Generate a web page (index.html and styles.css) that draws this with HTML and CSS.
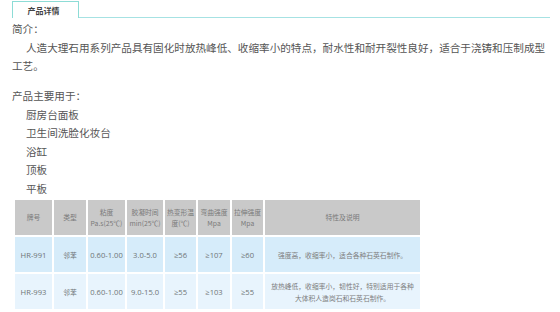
FILE: index.html
```html
<!DOCTYPE html>
<html lang="zh">
<head>
<meta charset="utf-8">
<link rel="stylesheet" href="styles.css">
</head>
<body>
<div class="tabs">
  <div class="tab">产品详情</div>
  <div class="tab-line"></div>
</div>
<div class="content">
  <p>简介：</p>
  <p class="indent">人造大理石用系列产品具有固化时放热峰低、收缩率小的特点，耐水性和耐开裂性良好，适合于浇铸和压制成型工艺。</p>
  <p class="gap">产品主要用于：</p>
  <ul class="uses">
    <li>厨房台面板</li>
    <li>卫生间洗脸化妆台</li>
    <li>浴缸</li>
    <li>顶板</li>
    <li>平板</li>
  </ul>
</div>
<table class="spec">
  <colgroup>
    <col class="c1"><col class="c2"><col class="c3"><col class="c4"><col class="c5"><col class="c6"><col class="c7"><col class="c8">
  </colgroup>
  <thead>
    <tr>
      <th>牌号</th>
      <th>类型</th>
      <th>粘度<br>Pa.s(25℃)</th>
      <th>胶凝时间<br>min(25℃)</th>
      <th>热变形温<br>度(℃)</th>
      <th>弯曲强度<br>Mpa</th>
      <th>拉伸强度<br>Mpa</th>
      <th>特性及说明</th>
    </tr>
  </thead>
  <tbody>
    <tr class="r1">
      <td>HR-991</td>
      <td class="cjk">邻苯</td>
      <td>0.60-1.00</td>
      <td>3.0-5.0</td>
      <td>≥56</td>
      <td>≥107</td>
      <td>≥60</td>
      <td class="desc">强度高，收缩率小，适合各种石英石制作。</td>
    </tr>
    <tr class="r2">
      <td>HR-993</td>
      <td class="cjk">邻苯</td>
      <td>0.60-1.00</td>
      <td>9.0-15.0</td>
      <td>≥55</td>
      <td>≥103</td>
      <td>≥55</td>
      <td class="desc">放热峰低，收缩率小，韧性好，特别适用于各种大体积人造岗石和石英石制作。</td>
    </tr>
  </tbody>
</table>
</body>
</html>
```
FILE: styles.css
```css
html, body {
  margin: 0;
  padding: 0;
  background: #fff;
}
body {
  width: 560px;
  height: 312px;
  overflow: hidden;
  font-family: "Noto Sans CJK SC", "Noto Sans", sans-serif;
  color: #555;
}
.tabs {
  display: flex;
  align-items: flex-end;
  height: 18px;
  padding-left: 12px;
  padding-right: 10px;
}
.tab {
  width: 67px;
  height: 17px;
  border: 1px solid #8ddcd6;
  border-bottom: none;
  font-size: 8px;
  font-weight: bold;
  color: #444;
  display: flex;
  align-items: center;
  justify-content: center;
  padding-right: 4px;
  box-sizing: border-box;
}
.tab-line {
  flex: 1;
  border-bottom: 1px solid #a6e2e3;
}
.content {
  padding: 2px 0 0 12px;
  font-size: 10.6px;
  line-height: 18.5px;
}
.content p {
  margin: 0;
}
.indent {
  text-indent: 14px;
  width: 540px;
}
.gap {
  margin-top: 11.5px !important;
}
.uses {
  list-style: none;
  margin: 0;
  padding: 0 0 0 14px;
}
.spec {
  margin-left: 13px;
  border-collapse: separate;
  border-spacing: 2px;
  table-layout: fixed;
  width: 409px;
  font-family: "Open Sans", "Noto Sans CJK SC", sans-serif;
}
.c1 { width: 37px; }
.c2 { width: 32px; }
.c3 { width: 37px; }
.c4 { width: 36px; }
.c5 { width: 31px; }
.c6 { width: 32px; }
.c7 { width: 31px; }
.c8 { width: 155px; }
.spec th, .spec td {
  height: 35px;
  padding: 0;
  text-align: center;
  vertical-align: middle;
  box-sizing: border-box;
}
.spec th {
  background: #c9c9c9;
  color: #7a7a7a;
  font-weight: normal;
  font-size: 6.8px;
  line-height: 11px;
  font-family: "Noto Sans CJK SC", sans-serif;
}
.spec td {
  font-size: 7.6px;
  color: #6f7477;
}
.spec td.cjk {
  font-family: "Noto Sans CJK SC", sans-serif;
  font-size: 6.8px;
}
.r1 td { background: #d6ecfa; }
.r2 td { background: #e8f4fd; }
.spec td.desc {
  font-family: "Noto Sans CJK SC", sans-serif;
  font-size: 6.8px;
  line-height: 12px;
  color: #7d7d7d;
  padding: 0 4px;
}
```
